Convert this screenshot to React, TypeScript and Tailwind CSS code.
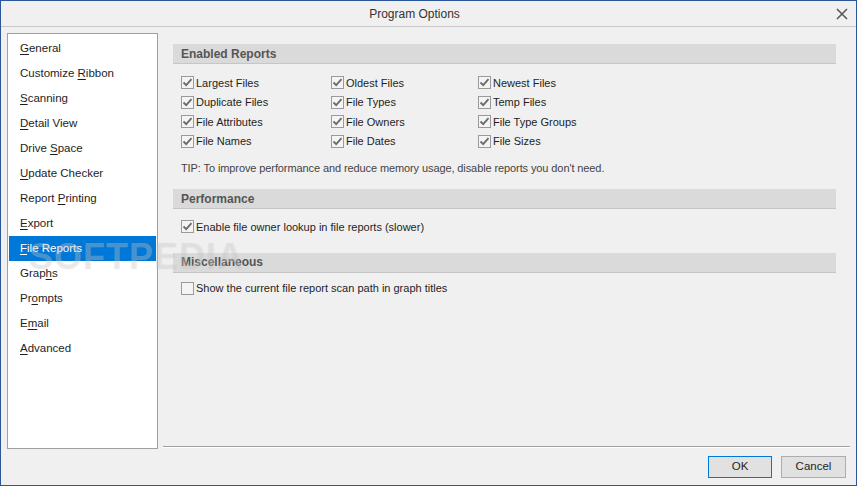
import React from 'react';

const navItems: { label: string; key: number }[] = [
  { label: 'General', key: 0 },
  { label: 'Customize Ribbon', key: 10 },
  { label: 'Scanning', key: 0 },
  { label: 'Detail View', key: 0 },
  { label: 'Drive Space', key: 6 },
  { label: 'Update Checker', key: 0 },
  { label: 'Report Printing', key: 7 },
  { label: 'Export', key: 0 },
  { label: 'File Reports', key: 0 },
  { label: 'Graphs', key: 4 },
  { label: 'Prompts', key: 2 },
  { label: 'Email', key: 1 },
  { label: 'Advanced', key: 0 },
];

const reports = [
  ['Largest Files', 'Oldest Files', 'Newest Files'],
  ['Duplicate Files', 'File Types', 'Temp Files'],
  ['File Attributes', 'File Owners', 'File Type Groups'],
  ['File Names', 'File Dates', 'File Sizes'],
];

function Checkbox({ checked }: { checked: boolean }) {
  return (
    <span className="w-[13px] h-[13px] border border-[#9a9a9a] bg-[#f4f4f4] flex items-center justify-center shrink-0">
      {checked && (
        <svg width="11" height="11" viewBox="0 0 11 11">
          <path d="M1.5 5.5 L4.2 8.2 L9.5 2.2" fill="none" stroke="#6b6b6b" strokeWidth="1.8" />
        </svg>
      )}
    </span>
  );
}

function CheckRow({ label, checked = true }: { label: string; checked?: boolean }) {
  return (
    <div className="flex items-center gap-[2px] h-[19.5px]">
      <Checkbox checked={checked} />
      <span>{label}</span>
    </div>
  );
}

function SectionHeader({ title }: { title: string }) {
  return (
    <div className="h-[20px] bg-[#dadada] border-b border-[#c6c6c6] flex items-center pl-[8px] font-bold text-[12px] text-[#555]">
      {title}
    </div>
  );
}

function NavLabel({ label, k }: { label: string; k: number }) {
  return (
    <span>
      {label.slice(0, k)}
      <span className="underline underline-offset-2">{label[k]}</span>
      {label.slice(k + 1)}
    </span>
  );
}

export default function App() {
  const selected = 'File Reports';
  return (
    <div
      className="w-[857px] h-[486px] bg-[#f0f0f0] border border-[#2b579a] flex flex-col text-[11px] text-[#1e1e1e] relative overflow-hidden"
      style={{ fontFamily: '"Liberation Sans", Arial, sans-serif' }}
    >
      {/* Title bar */}
      <div className="h-[26px] border-b border-[#c8c8c8] flex items-center shrink-0">
        <div className="flex-1 text-center text-[12px] text-[#333]">Program Options</div>
        <div className="w-[28px] flex items-center justify-center">
          <svg width="12" height="12" viewBox="0 0 12 12">
            <path d="M1 1 L11 11 M11 1 L1 11" stroke="#555" strokeWidth="1.5" />
          </svg>
        </div>
      </div>

      <div className="flex h-[422px] shrink-0">
        {/* Left nav */}
        <div className="ml-[6px] mt-[6px] w-[151px] h-[416px] bg-white border border-[#a0a0a0] p-[1px] pt-[2px]">
          {navItems.map((it) => (
            <div
              key={it.label}
              className={
                'h-[25px] flex items-center pl-[11px] text-[11.5px] ' +
                (it.label === selected ? 'bg-[#0078d7] text-white' : '')
              }
            >
              <NavLabel label={it.label} k={it.key} />
            </div>
          ))}
        </div>

        {/* Right content */}
        <div className="ml-[5px] w-[687px] flex flex-col">
          <div className="flex-1 pt-[17px] pl-[10px] pr-[14px]">
            <SectionHeader title="Enabled Reports" />
            <div className="mt-[9px] pl-[8px] grid grid-cols-[150px_147px_1fr]">
              {reports.flat().map((r) => (
                <CheckRow key={r} label={r} />
              ))}
            </div>
            <div className="mt-[9px] pl-[8px] h-[16px] leading-[16px] text-[#444] tracking-[-0.1px]">
              TIP: To improve performance and reduce memory usage, disable reports you don't need.
            </div>
            <div className="mt-[13px]">
              <SectionHeader title="Performance" />
            </div>
            <div className="mt-[8px] pl-[8px]">
              <CheckRow label="Enable file owner lookup in file reports (slower)" />
            </div>
            <div className="mt-[16px]">
              <SectionHeader title="Miscellaneous" />
            </div>
            <div className="mt-[6px] pl-[8px]">
              <CheckRow label="Show the current file report scan path in graph titles" checked={false} />
            </div>
          </div>
          <div className="h-[2px] border-t border-[#a0a0a0] bg-white mb-[1px]" />
        </div>
      </div>

      {/* Footer */}
      <div className="flex justify-end gap-[9px] pr-[10px] pt-[7px]">
        <button className="w-[64px] h-[22px] bg-[#e1e1e1] border border-[#0078d7] text-[11.5px] text-[#1e1e1e]">
          OK
        </button>
        <button className="w-[65px] h-[22px] bg-[#e1e1e1] border border-[#adadad] text-[11.5px] text-[#1e1e1e]">
          Cancel
        </button>
      </div>

      {/* watermark */}
      <div className="absolute left-[28px] top-[229px] text-[36px] font-bold tracking-[1px] text-white/30 [text-shadow:0_0_1px_rgba(0,0,0,0.12)] pointer-events-none select-none">
        SOFTPEDIA
      </div>
    </div>
  );
}
